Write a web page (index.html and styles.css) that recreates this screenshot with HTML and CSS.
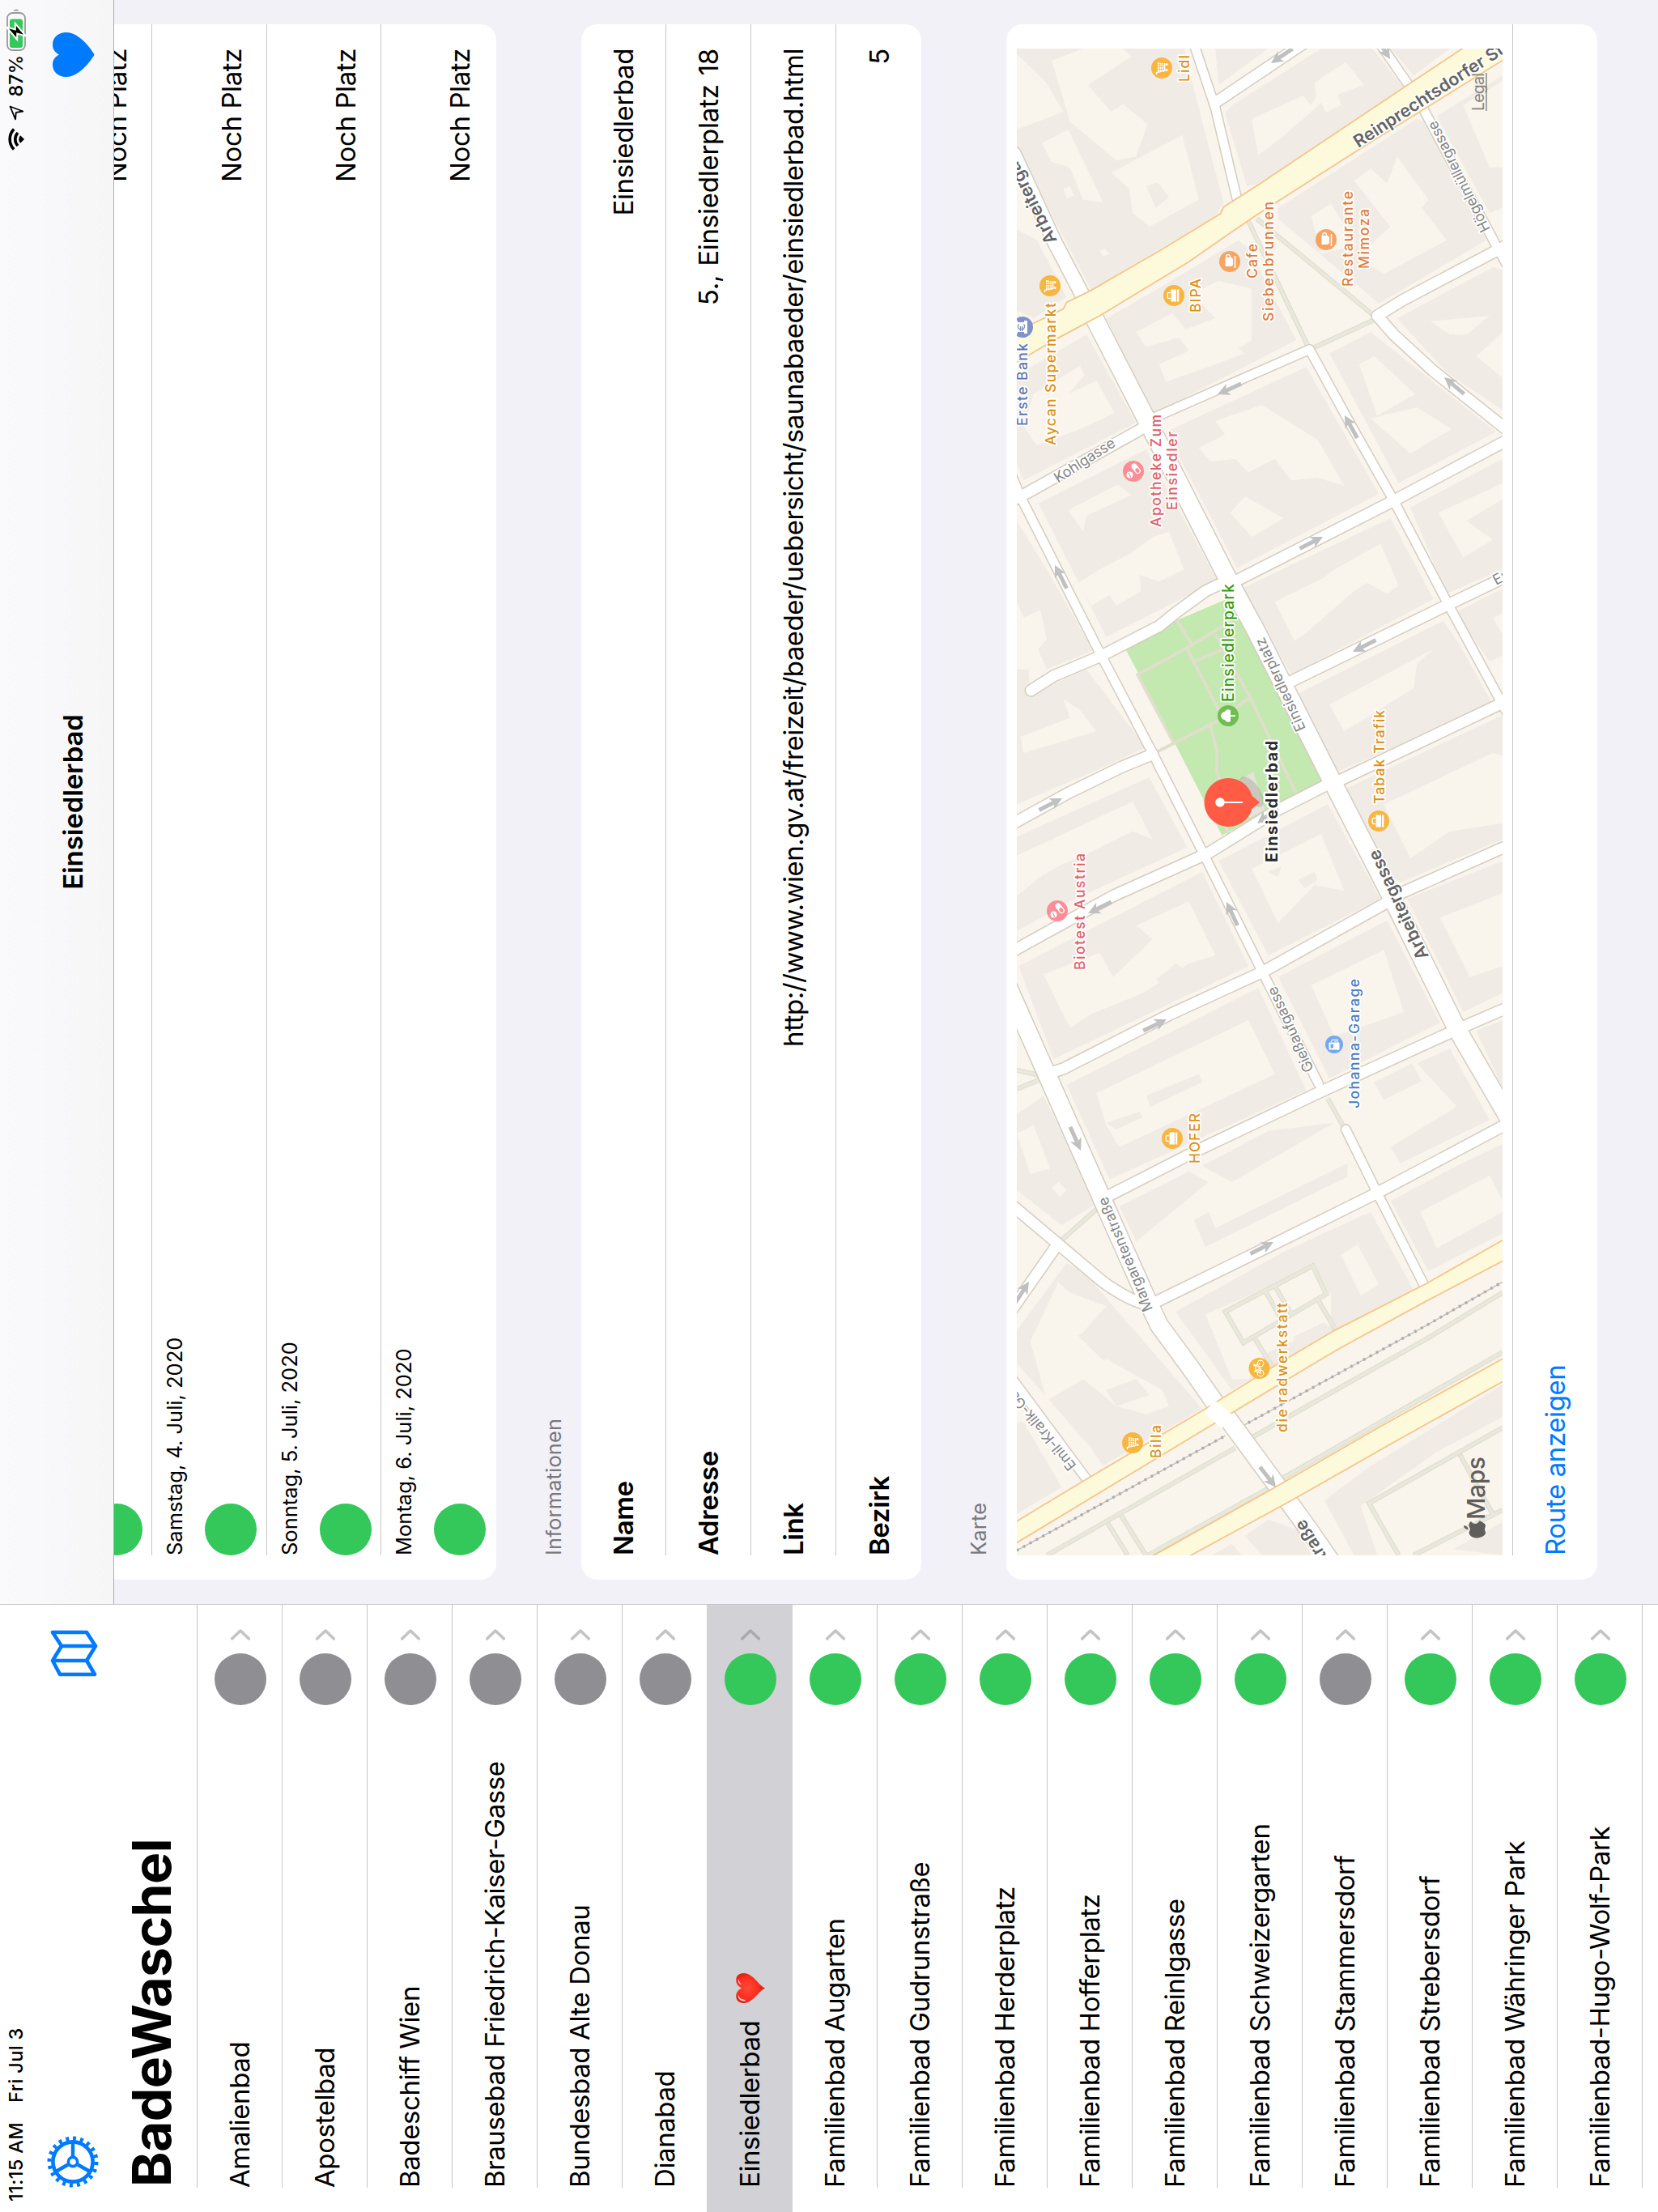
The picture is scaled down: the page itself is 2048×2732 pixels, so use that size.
FILE: index.html
```html
<!DOCTYPE html>
<html lang="de">
<head>
<meta charset="utf-8">
<title>BadeWaschel</title>
<link rel="stylesheet" href="styles.css">
</head>
<body>
<div class="screen">
<div class="device">
  <aside class="sidebar">
    <div class="status status-left"><span>11:15 AM</span><span>Fri Jul 3</span></div>
    <div class="toolbar">
      <svg class="gear" viewBox="-32 -32 64 64" fill="none" stroke="#007aff">
        <circle r="29" stroke-width="5" stroke-dasharray="4 5.11"/>
        <circle r="24.6" stroke-width="4.6"/>
        <circle r="5.6" stroke-width="3.6"/>
        <path d="M7 0H23M-3.5 -6L-12 -21M-3.5 6L-12 21" stroke-width="4.4"/>
      </svg>
      <svg class="fold" viewBox="0 0 62 60" fill="none" stroke="#007aff" stroke-width="4.6" stroke-linejoin="round">
        <path d="M5 13L22 4L40 15L57 4V46L40 57L22 46L5 56ZM22 4V46M40 15V57"/>
      </svg>
    </div>
    <h1>BadeWaschel</h1>
    <ul class="baths">
      <li><span>Amalienbad</span><i class="dot off"></i><b class="chev"></b></li>
      <li><span>Apostelbad</span><i class="dot off"></i><b class="chev"></b></li>
      <li><span>Badeschiff Wien</span><i class="dot off"></i><b class="chev"></b></li>
      <li><span>Brausebad Friedrich-Kaiser-Gasse</span><i class="dot off"></i><b class="chev"></b></li>
      <li><span>Bundesbad Alte Donau</span><i class="dot off"></i><b class="chev"></b></li>
      <li class="last"><span>Dianabad</span><i class="dot off"></i><b class="chev"></b></li>
      <li class="selected"><span>Einsiedlerbad</span>
        <svg class="love" viewBox="0 0 40 38">
          <defs><radialGradient id="red" cx=".5" cy=".4" r=".65"><stop offset="0" stop-color="#ff4a38"/><stop offset=".6" stop-color="#fb2c1c"/><stop offset="1" stop-color="#b51509"/></radialGradient></defs>
          <path d="M20 37.5C17 30 1 22 1 10.500C1 4 5 .8 10 .8C14.500 .8 18 3.500 20 8C22 3.500 25.500 .8 30 .8C35 .8 39 4 39 10.500C39 22 23 30 20 37.500Z" fill="url(#red)"/>
          <path d="M3.500 12C3 5 8 2.500 12 3.500C8 4.500 5.500 7 5 13ZM24 8C25 4 29 2.500 32 3.500C28 4.500 26 6.500 24 8Z" fill="#fff" opacity=".75"/>
        </svg><i class="dot"></i><b class="chev"></b></li>
      <li><span>Familienbad Augarten</span><i class="dot"></i><b class="chev"></b></li>
      <li><span>Familienbad Gudrunstraße</span><i class="dot"></i><b class="chev"></b></li>
      <li><span>Familienbad Herderplatz</span><i class="dot"></i><b class="chev"></b></li>
      <li><span>Familienbad Hofferplatz</span><i class="dot"></i><b class="chev"></b></li>
      <li><span>Familienbad Reinlgasse</span><i class="dot"></i><b class="chev"></b></li>
      <li><span>Familienbad Schweizergarten</span><i class="dot"></i><b class="chev"></b></li>
      <li><span>Familienbad Stammersdorf</span><i class="dot off"></i><b class="chev"></b></li>
      <li><span>Familienbad Strebersdorf</span><i class="dot"></i><b class="chev"></b></li>
      <li><span>Familienbad Währinger Park</span><i class="dot"></i><b class="chev"></b></li>
      <li><span>Familienbad-Hugo-Wolf-Park</span><i class="dot"></i><b class="chev"></b></li>
    </ul>
  </aside>

  <main class="detail">
    <header>
      <div class="status status-right">
        <svg class="wifi" viewBox="0 0 28 21"><path d="M1.500 7.200A18 18 0 0 1 26.500 7.200M6 12A11.600 11.600 0 0 1 22 12" fill="none" stroke="#000" stroke-width="3.600"/><path d="M14 20L9.300 15.200A6.500 6.500 0 0 1 18.700 15.200Z"/></svg>
        <svg class="loc" viewBox="0 0 19 19"><path d="M17.500 1.500L11.500 17.300L10.200 8.800L1.700 8.100Z" fill="none" stroke="#000" stroke-width="1.800" stroke-linejoin="round"/></svg>
        <span>87%</span>
        <svg class="battery" viewBox="0 0 53 24"><rect x="1" y="1" width="46" height="22" rx="6.500" fill="none" stroke="#999" stroke-width="1.800"/><rect x="4" y="4" width="35.500" height="16" rx="3" fill="#34c759"/><path d="M49.500 8.500C52.300 9.500 52.300 14.500 49.500 15.500Z" fill="#999"/><path d="M29.500 0L14 13.200H21.500L18.500 24L34 10.800H26.500Z" fill="#000" stroke="#fff" stroke-width="2"/></svg>
      </div>
      <div class="bar">
        <h2>Einsiedlerbad</h2>
        <svg class="fav" viewBox="0 0 55 52"><path d="M27.500 51.500C24 50 0 34 0 17C0 6 7 0 15 0C21 0 25 3 27.500 8C30 3 34 0 40 0C48 0 55 6 55 17C55 34 31 50 27.500 51.500Z" fill="#007aff"/></svg>
      </div>
    </header>
    <div class="scroll">
      <section class="card days">
        <div class="day"><p>Freitag, 3. Juli, 2020</p><div><i class="dot"></i><span>Noch Platz</span></div></div>
        <div class="day"><p>Samstag, 4. Juli, 2020</p><div><i class="dot"></i><span>Noch Platz</span></div></div>
        <div class="day"><p>Sonntag, 5. Juli, 2020</p><div><i class="dot"></i><span>Noch Platz</span></div></div>
        <div class="day"><p>Montag, 6. Juli, 2020</p><div><i class="dot"></i><span>Noch Platz</span></div></div>
      </section>
      <h3>Informationen</h3>
      <section class="card facts">
        <div><b>Name</b><span>Einsiedlerbad</span></div>
        <div><b>Adresse</b><span class="address">5., Einsiedlerplatz 18</span></div>
        <div><b>Link</b><span class="url">http://www.wien.gv.at/freizeit/baeder/uebersicht/saunabaeder/einsiedlerbad.html</span></div>
        <div><b>Bezirk</b><span>5</span></div>
      </section>
      <h3>Karte</h3>
      <section class="card">
        <div class="mapbox">
<svg class="map" viewBox="0 0 1861 600" width="1861" height="600">
<defs>
  <g id="arrow"><path d="M-32 0H-10" stroke="#c0c0c0" stroke-width="5"/><path d="M0 0L-15 -7.500L-11 0L-15 7.500Z" fill="#c0c0c0"/></g>
  <g id="cart"><circle r="13" fill="#f7b640"/><path d="M-8 -6.500H-5.500L-3.500 3.500H6" fill="none" stroke="#fff" stroke-width="1.500"/><path d="M-5 -5H7L5.500 2H-3.500Z" fill="#fff"/><path d="M-4.500 -2.700H6.500M-4 -.2H6M-1.500 -5V2M1.500 -5V2M4 -5V2" stroke="#f7b640" stroke-width=".8"/><circle cx="-2.500" cy="6" r="1.600" fill="#fff"/><circle cx="4.500" cy="6" r="1.600" fill="#fff"/></g>
  <g id="bag"><circle r="13" fill="#f7b640"/><rect x="-7.500" y="-3.500" width="15" height="6.500" fill="#fff"/><rect x="-7.500" y="4" width="15" height="2.300" fill="#fff"/><path d="M-3.500 -4V-6.500Q-3.500 -7.800 -2 -7.800H2Q3.500 -7.800 3.500 -6.500V-4" fill="none" stroke="#fff" stroke-width="1.400"/></g>
  <g id="cup"><circle r="13" fill="#f7a463"/><path d="M-6 -5.500H5V1Q5 4 2 4H-3Q-6 4 -6 1Z" fill="#fff"/><path d="M5 -4H6.500Q8.500 -4 8.500 -2Q8.500 .5 5 .5" fill="none" stroke="#fff" stroke-width="1.400"/><path d="M-8 6.500H7" stroke="#fff" stroke-width="1.600"/></g>
  <g id="pill"><circle r="13" fill="#fb8d97"/><circle cx="-4.500" cy="-4.500" r="4" fill="#fff"/><path d="M-7.500 -3.200L-2 -6" stroke="#fb8d97" stroke-width="1.200"/><g transform="rotate(-38)"><rect x="-6.500" y="1" width="14" height="7" rx="3.500" fill="#fff"/><rect x="-5.300" y="2.300" width="6" height="4.400" rx="2.200" fill="#fb8d97"/></g></g>
</defs>
<rect width="1861" height="600" fill="#f9f5ed"/>
<g transform="matrix(0 .408163 -.333333 0 1871 -16)">
  <g class="block">
    <path d="M39 330L180 265L130 160L39 50V30H545L600 300L665 600L640 650L265 925L39 400Z"/>
    <path d="M640 30H800L650 165ZM1170 30H1350L1240 130Z"/>
    <path d="M690 240L960 30H1115L1210 175L775 530L735 540L670 270Z"/>
    <path d="M830 620L1250 290L1270 300L1460 740L1135 975L830 660Z"/>
    <path d="M710 740L740 770L885 1110L450 1385L310 1030L480 910Z"/>
    <path d="M1310 280L1509 130V620L1470 640Z"/>
    <path d="M39 700L100 740L190 950L90 1030L39 1000Z"/>
    <path d="M39 1240L250 1090L400 1415L60 1630L39 1570Z"/>
    <path d="M105 1715L430 1515L645 2000L600 2030L310 2210Z"/>
    <path d="M490 1450L915 1210L1135 1680L705 1955L620 1750Z"/>
    <path d="M720 2030L1170 1770L1300 2070L870 2350Z"/>
    <path d="M890 2420L1330 2150L1380 2240L1480 2460L1010 2710L950 2600Z"/>
    <path d="M985 1160L1110 1080L1490 1450L1195 1640Z"/>
    <path d="M1190 1030L1480 840L1509 850V1370L1340 1230Z"/>
    <path d="M1230 1730L1509 1550V1960L1340 2050Z"/>
    <path d="M1365 2120L1509 2030V2280L1470 2300Z"/>
    <path d="M39 1780L130 1960L270 2260L130 2330L39 2080Z"/>
    <path d="M39 2330H75L80 2430L160 2380L250 2330L430 2620L270 2710L39 2830Z"/>
    <path d="M39 2950L440 2730L555 2990L200 3190L39 3300Z"/>
    <path d="M45 3430L600 3080L740 3430L150 3775Z"/>
    <path d="M190 3870L770 3510L915 3890L320 4220Z"/>
    <path d="M650 3040L980 2830L1140 3180L800 3390Z"/>
    <path d="M830 3470L1160 3260L1320 3640L985 3845Z"/>
    <path d="M1020 2780L1509 2500V2960L1200 3120L1140 3070Z"/>
    <path d="M1220 3180L1509 3040V3530L1390 3600Z"/>
    <path d="M1430 3670L1509 3630V3880Z"/>
    <path d="M1120 3860L1235 3790L1265 3855L1150 3925ZM1250 3790L1350 3735L1470 4000L1200 4160L1170 4100L1370 3950Z"/>
    <path d="M39 3980L120 3910L280 4310L175 4390L39 4260Z"/>
    <path d="M350 4320L560 4190L620 4230L400 4450ZM575 4370L620 4340L640 4400L1040 4160V4210L610 4470ZM600 4170L800 4040L1000 4010L690 4230Z"/>
    <path d="M1170 4300L1370 4170L1509 4090V4420L1285 4560Z"/>
    <path d="M39 4780L190 4530L240 4560L600 5070L300 5280L260 5210L39 4900Z"/>
    <path d="M520 4710L860 4480L1110 4340L1240 4630L1010 4780L690 5000Z"/>
    <path d="M39 5120L60 5120L175 5360L39 5460Z"/>
    <path d="M970 5410L1100 5290L1509 4980V5100L1310 5230L1080 5430L1130 5613H1060Z"/>
    <path d="M730 5540L800 5480L890 5520L930 5613H780ZM1360 5590L1509 5490V5613ZM630 5613L690 5570L720 5613Z"/>
  </g>
  <g class="court">
    <path d="M145 75L240 30H360L385 60L255 165L325 265L360 235L435 310L400 430L340 445L200 300Z"/>
    <path d="M115 380L195 330L250 470L300 600L240 590L200 470L145 450Z"/>
    <path d="M325 490L540 350L590 590L440 690L390 640L380 550ZM180 550L200 540L212 575L190 585ZM290 780L305 770L320 790L302 800Z"/>
    <path d="M750 290L905 205L930 240L945 205L940 160L970 130L1035 80L1090 165L1010 200L1020 240L975 265L960 230L925 270L860 340L770 425Z"/>
    <path d="M1060 520L1110 475L1160 530L1190 430L1285 590L1265 620L1340 740L1150 865L1070 800L1170 690ZM930 650L990 605L1070 760L960 790Z"/>
    <path d="M400 1080L510 1010L550 1070L640 1030L570 940L650 890L750 920V1110L710 1140L730 1160L490 1265L470 1200L560 1150L530 1100L430 1135Z"/>
    <path d="M1390 240L1509 150V470H1470Z"/>
    <path d="M90 1310L230 1205L245 1240L195 1310L280 1260L335 1380L230 1440L100 1500L60 1430Z"/>
    <path d="M195 1740L345 1645L385 1685L250 1760L240 1820ZM225 2010L290 1960L385 1900L450 1840L500 1820L545 1960L470 2005L410 1980L415 2040L340 2095L320 2055L265 2095Z"/>
    <path d="M590 1510L670 1460L640 1410L780 1350L950 1480L1030 1650L950 1620L870 1630L820 1550L740 1600L700 1550L625 1560ZM685 1750L730 1690L845 1770L750 1840Z"/>
    <path d="M820 2080L970 1990L1000 1960L1140 1865L1195 2020L1160 2050L1100 2010L1060 2040L910 2200L880 2225Z"/>
    <path d="M985 2460L1300 2255L1250 2310L1240 2400L1030 2560Z"/>
    <path d="M1075 1200L1120 1170L1245 1310L1130 1390ZM1110 1400L1250 1360L1355 1440L1230 1530Z"/>
    <path d="M1290 1040L1470 1020L1400 1090L1350 1090ZM1430 1170L1509 1080V1250Z"/>
    <path d="M1315 1750L1509 1640V1700L1400 1780L1480 1850L1390 1915ZM1480 2140L1509 2120V2200Z"/>
    <path d="M39 2150L110 2110L130 2220L100 2260L39 2190ZM50 2580L200 2510L180 2440L230 2480L280 2560L60 2640Z"/>
    <path d="M75 3000L390 2820L450 2960L390 2930L240 3020L180 3050L110 3100L39 3170V3020Z"/>
    <path d="M120 3460L290 3380L330 3470L450 3330L400 3280L560 3190L640 3390L560 3420L420 3530L260 3610L200 3660Z"/>
    <path d="M280 3900L400 3830L740 3630L820 3830L350 4100L310 4020Z"/>
    <path d="M750 3070L960 2940L1030 3150L940 3130L900 3180L830 3270Z"/>
    <path d="M930 3500L1150 3370L1210 3600L1000 3690ZM1150 2830L1480 2640L1509 2650V2900L1350 2930L1230 3030Z"/>
    <path d="M1320 3250L1509 3160V3430L1410 3470ZM39 4050L90 4020L140 4180L80 4200Z"/>
    <path d="M1260 4340L1470 4205L1509 4300V4340L1310 4475ZM145 4250L165 4230L190 4260L170 4285Z"/>
    <path d="M80 4820L165 4600L200 4640L310 4690L230 4800L330 4900L480 5000L500 5060L430 5090L340 5060L240 4960L130 5040Z"/>
    <path d="M610 4720L780 4630L930 4550L990 4650L990 4760L800 4860L740 4960L690 4960ZM1020 4500L1070 4460L1135 4610L1080 4650Z"/>
  </g>
  <g class="block"><path d="M255 165L340 120L325 265ZM430 540L465 525L500 580L460 620ZM460 3480L520 3420L545 3440L480 3500ZM430 3910L590 3830L600 3860L445 3950ZM310 4010L410 3970L420 3990L340 4035ZM800 3080L840 3060L830 3100ZM890 3110L940 3080L950 3110L910 3140ZM310 5000L400 4960L440 5020L340 5060ZM225 4800L290 4750L370 4870L300 4890ZM880 4800L970 4750L990 4770L870 4850Z"/></g>
  <path d="M368 2255L530 2145L670 2072L710 2140L965 2740L830 2835L660 2945L595 2790L520 2610L405 2340Z" fill="#c3e8b0"/>
  <path d="M690 2760L755 2710L790 2850L745 2880L700 2790Z" fill="#e6e3da"/>
  <g class="parkway">
    <path d="M520 2140L570 2240M555 2255L650 2480M515 2605L405 2350L555 2250L690 2150M580 2300L665 2255M640 2200L745 2435L885 2790M745 2435L640 2525L465 2635M625 2540L645 2630V2710L655 2750M668 2900L680 2945"/>
  </g>
  <g class="path-edge"><path d="M740 670L925 1145M765 660L1120 1020M925 1145L1130 1030M39 3815L110 3835M39 3885L110 3850M980 3920L1030 4030M285 4325L175 4445M670 4710L935 4540L975 4645L725 4825ZM790 4630L840 4740M820 4615L870 4720M760 4810L815 4920M950 4665L1005 4780M130 5613L700 5215M745 5180L1280 4810L1509 4640M435 5613L800 5365M840 5330L1509 4860M315 5495L375 5613M355 5465L430 5613M1195 5613L1105 5420L1509 5140M1380 5240L1480 5460M1240 5613L1509 5445"/></g>
  <g class="path-fill"><path d="M740 670L925 1145M765 660L1120 1020M925 1145L1130 1030M39 3815L110 3835M39 3885L110 3850M980 3920L1030 4030M285 4325L175 4445M670 4710L935 4540L975 4645L725 4825ZM790 4630L840 4740M820 4615L870 4720M760 4810L815 4920M950 4665L1005 4780M130 5613L700 5215M745 5180L1280 4810L1509 4640M435 5613L800 5365M840 5330L1509 4860M315 5495L375 5613M355 5465L430 5613M1195 5613L1105 5420L1509 5140M1380 5240L1480 5460M1240 5613L1509 5445"/></g>
  <path d="M39 5595L670 5170M720 5135L1280 4760L1509 4600" class="rail"/>
  <path d="M39 5595L670 5170M720 5135L1280 4760L1509 4600" class="rail-ties"/>
  <g class="edge">
    <path class="w10" d="M577 20L640 250L705 585M1140 15L1225 165L1270 255L1490 760L1540 870M450 1400L710 1260L925 1145L1055 1435L1180 1705L1345 2090L1509 2460L1560 2580M20 1600L50 1690L295 2280L450 2640L605 3015L780 3445L952 3865M1035 4035L1130 4270L1275 4620M20 4950L250 5330"/>
    <path class="w12" d="M640 230L920 0M1520 760L1210 960L1130 1020L1180 1090L1300 1225L1540 1460M430 1430L50 1690L0 1720M82 2408L150 2355L295 2280L470 2170L520 2120L610 2040L670 2005M690 2010L1180 1705L1540 1470M860 2380L1345 2090L1540 1975M1010 2745L1500 2460L1560 2425M990 2750L830 2850L620 3010L330 3170L0 3392M450 2645L360 2690L200 2785L0 2920M1540 2975L1200 3160L1150 3200L785 3450L500 3610L180 3810L140 3825M1540 3575L1370 3665L950 3900L590 4110L310 4285M0 4290L165 4460L300 4600Q380 4670 430 4682M0 4745L160 4465M450 4680L800 4470L1130 4270L1560 3990"/>
    <path class="w17" d="M30 420L155 750L245 960"/>
    <path class="w21" d="M270 1020L430 1400L680 2000L760 2180L1000 2760L1180 3190L1370 3660L1560 4060M10 3500L39 3580L130 3830L300 4300L435 4670L470 4760L560 4910L640 5050L680 5110L830 5360L930 5530L1020 5690"/>
  </g>
  <g class="road">
    <path class="w10" d="M577 20L640 250L705 585M1140 15L1225 165L1270 255L1490 760L1540 870M450 1400L710 1260L925 1145L1055 1435L1180 1705L1345 2090L1509 2460L1560 2580M20 1600L50 1690L295 2280L450 2640L605 3015L780 3445L952 3865M1035 4035L1130 4270L1275 4620M20 4950L250 5330"/>
    <path class="w12" d="M640 230L920 0M1520 760L1210 960L1130 1020L1180 1090L1300 1225L1540 1460M430 1430L50 1690L0 1720M82 2408L150 2355L295 2280L470 2170L520 2120L610 2040L670 2005M690 2010L1180 1705L1540 1470M860 2380L1345 2090L1540 1975M1010 2745L1500 2460L1560 2425M990 2750L830 2850L620 3010L330 3170L0 3392M450 2645L360 2690L200 2785L0 2920M1540 2975L1200 3160L1150 3200L785 3450L500 3610L180 3810L140 3825M1540 3575L1370 3665L950 3900L590 4110L310 4285M0 4290L165 4460L300 4600Q380 4670 430 4682M0 4745L160 4465M450 4680L800 4470L1130 4270L1560 3990"/>
    <path class="w17" d="M30 420L155 750L245 960"/>
    <path class="w21" d="M270 1020L430 1400L680 2000L760 2180L1000 2760L1180 3190L1370 3660L1560 4060M10 3500L39 3580L130 3830L300 4300L435 4670L470 4760L560 4910L640 5050L680 5110L830 5360L930 5530L1020 5690"/>
  </g>
  <g class="main">
    <path d="M1430 -5L1240 150L770 535L665 617L655 642L470 780L350 865L265 925L190 970L180 995L0 1100V1220L160 1105L290 1020L560 820L760 650L1080 400L1560 35V-5Z"/>
    <path d="M0 5515L265 5320L610 5070L820 4910L1000 4780L1280 4605L1560 4410V4490L1280 4670L1010 4850L860 4960L480 5240L0 5595Z"/>
    <path d="M400 5650L800 5375L1140 5135L1560 4850V4935L1200 5180L870 5410L510 5650Z"/>
  </g>
  <path d="M622 5062L676 5118" fill="none" stroke="#fff" stroke-width="21" vector-effect="non-scaling-stroke"/>
</g>
<g>
  <use href="#arrow" transform="translate(1843 314) rotate(-124)"/><use href="#arrow" transform="translate(1848 461) rotate(148)"/>
  <use href="#arrow" transform="translate(1434 248) rotate(-114)"/><use href="#arrow" transform="translate(1455 528) rotate(-50)"/>
  <use href="#arrow" transform="translate(1408 405) rotate(-29)"/><use href="#arrow" transform="translate(1223 47) rotate(-27)"/>
  <use href="#arrow" transform="translate(1258 378) rotate(63)"/><use href="#arrow" transform="translate(1116 415) rotate(-117)"/>
  <use href="#arrow" transform="translate(935 56) rotate(63)"/><use href="#arrow" transform="translate(793 88) rotate(-116)"/>
  <use href="#arrow" transform="translate(807 259) rotate(-25)"/><use href="#arrow" transform="translate(662 185) rotate(64)"/>
  <use href="#arrow" transform="translate(500 79) rotate(156)"/><use href="#arrow" transform="translate(904 297) rotate(-127)"/>
  <use href="#arrow" transform="translate(338 15) rotate(33)"/><use href="#arrow" transform="translate(387 317) rotate(63)"/>
  <use href="#arrow" transform="translate(84 320) rotate(142)"/>
</g>
<g class="street">
  <text class="major" transform="translate(740 509) rotate(-25)" textLength="147">Arbeitergasse</text>
  <text class="major" transform="translate(1624 50) rotate(-26.500)" textLength="147">Arbeitergasse</text>
  <text class="major" transform="translate(1738 422) rotate(57)">Reinprechtsdorfer Straße</text>
  <text class="major" transform="translate(46 355) rotate(-31)" text-anchor="end">Margaretenstraße</text>
  <text transform="translate(1638 585) rotate(-26.400)" textLength="151">Högelmüllergasse</text>
  <text transform="translate(1324 51) rotate(57)" textLength="86">Kohlgasse</text>
  <text transform="translate(1021 357) rotate(-24.500)" textLength="125">Einsiedlerplatz</text>
  <text transform="translate(600 367) rotate(-24.300)" textLength="114">Gießaufgasse</text>
  <text transform="translate(304 168) rotate(-22)" textLength="151">Margaretenstraße</text>
  <text transform="translate(111 74) rotate(-39)" textLength="150">Emil-Kralik-Gasse</text>
  <text transform="translate(1198 592) rotate(62)">Ernst</text>
</g>
<g class="poi">
  <g class="shop">
    <use href="#cart" x="1837" y="179"/><text x="1820" y="212.500" textLength="33">Lidl</text>
    <use href="#cart" x="1568" y="41"/><text x="1371" y="47.500" textLength="176">Aycan Supermarkt</text>
    <use href="#bag" x="1556" y="194"/><text x="1535" y="226.500" textLength="42">BIPA</text>
    <use href="#bag" x="907" y="447"/><text x="928" y="454" textLength="116">Tabak Trafik</text>
    <use href="#bag" x="515" y="192"/><text x="484" y="225.500" textLength="62">HOFER</text>
    <use href="#cart" x="139" y="143"/><text x="120" y="177.500" textLength="41">Billa</text>
    <circle cx="231" cy="299.500" r="13" fill="#f7b640"/>
    <g fill="none" stroke="#fff" stroke-width="1.200"><circle cx="225" cy="301" r="3.800"/><circle cx="237" cy="301" r="3.800"/><path d="M225 301L228 295H235L231 301ZM231 301L227 293M237 301L234 293H237"/></g>
    <text x="152" y="333.500" textLength="160">die radwerkstatt</text>
  </g>
  <g class="food">
    <use href="#cup" x="1598" y="263"/><text x="1577" y="296.500" textLength="43">Cafe</text><text x="1524" y="316.500" textLength="148">Siebenbrunnen</text>
    <use href="#cup" x="1625" y="382"/><text x="1567" y="414.500" textLength="118">Restaurante</text><text x="1589" y="435" textLength="74">Mimoza</text>
  </g>
  <g class="med">
    <use href="#pill" x="1339" y="144"/><text x="1270" y="177.500" textLength="139">Apotheke Zum</text><text x="1291" y="197.500" textLength="97">Einsiedler</text>
    <use href="#pill" x="796" y="50"/><text x="723" y="84" textLength="144">Biotest Austria</text>
  </g>
  <g class="bank"><circle cx="1517" cy="7" r="13" fill="#7f93c4"/><path d="M1509 -2H1525V1H1523V9H1525V13H1509V9H1511V1H1509Z" fill="#fff"/><path d="M1520.500 2.500A4 4 0 1 0 1520.500 8.500M1512 4.500H1518M1512 6.800H1518" fill="none" stroke="#7f93c4" stroke-width="1.400"/><text x="1395" y="13" textLength="102">Erste Bank</text></g>
  <g class="gas"><circle cx="631" cy="392" r="11" fill="#74a8f0"/><path d="M625 386H633V398H625ZM624 397H634" fill="#fff" stroke="#fff"/><rect x="626.500" y="387.500" width="5" height="3.500" fill="#74a8f0"/><path d="M634 388L637 390V396H635V392" fill="none" stroke="#fff" stroke-width="1.200"/><text x="552" y="423" textLength="160">Johanna-Garage</text></g>
  <g class="green"><circle cx="1037" cy="261" r="13" fill="#72bd50"/><path d="M1036 270V264H1030Q1028 259 1031.500 257.500Q1033 252 1037 252Q1041 252 1042.500 257.500Q1046 259 1044 264H1038V270Z" fill="#fff"/><text x="1054" y="268" textLength="146">Einsiedlerpark</text></g>
  <ellipse cx="943" cy="290" rx="22" ry="10" fill="#000" opacity=".12" transform="rotate(-35 943 290)"/>
  <path d="M930 300L922 290.500A30 30 0 1 1 938 290.500Z" fill="#ff5b45"/>
  <circle cx="930" cy="251" r="5.800" fill="#fff"/><path d="M930 255V279" stroke="#fff" stroke-width="2"/>
  <text class="place" x="856" y="321.500" textLength="150">Einsiedlerbad</text>
</g>
<text class="legal" x="1784" y="577" textLength="47">Legal</text>
<path d="M1784 580H1831" stroke="#8a8884" stroke-width="1.500"/>
<text class="maps" x="44" y="578" textLength="78">Maps</text>
<path d="M32 560C34 560 35 558.500 37.500 558.500C39.500 558.500 41 559.500 42 561C37.500 564 38.500 569.500 42.800 571.500C41.500 575 39 579 36.800 579C35 579 34.500 578 32.300 578C30 578 29.500 579 27.800 579C24.500 579 21.500 572.500 21.500 567.500C21.500 562 25 558.600 28.200 558.600C30 558.600 31 560 32 560ZM32 557.500C31.800 555 34 552.200 36.800 552C37 555 34.800 557.500 32 557.500Z" fill="#5f5e5b"/>
</svg>
        </div>
        <div class="route">Route anzeigen</div>
      </section>
    </div>
  </main>
</div>
</div>
</body>
</html>
```

FILE: styles.css
```css
* { box-sizing: border-box; margin: 0; padding: 0; }
body { width: 2048px; height: 2732px; overflow: hidden; background: #fff; }
.screen { width: 2048px; height: 2732px; overflow: hidden; }
.device {
  width: 2732px; height: 2048px;
  display: grid; grid-template-columns: 751px 1981px;
  transform-origin: 0 0;
  transform: translateY(2732px) rotate(-90deg);
  font-family: Inter, "Liberation Sans", sans-serif;
  font-size: 33px; letter-spacing: -0.4px; color: #000; line-height: 1.2;
}
i, b { font-style: normal; }

.sidebar { height: 2048px; border-right: 1px solid #c6c6c8; background: #fff; overflow: hidden; }
.status { height: 40px; display: flex; align-items: center; font-size: 23.500px; letter-spacing: 0; font-weight: 450; }
.status-left { padding-left: 13px; gap: 24px; letter-spacing: 0.35px; }
.toolbar { height: 100px; padding: 0 29px 0 30px; display: flex; justify-content: space-between; align-items: center; }
.gear { width: 64px; height: 64px; }
.fold { width: 62px; height: 60px; margin-top: 1px; }
h1 { height: 103px; padding: 2px 0 0 31px; font-size: 66px; line-height: 90px; font-weight: 700; letter-spacing: -0.6px; }
.baths { list-style: none; }
.baths li {
  height: 105px; margin-left: 30px; padding: 2px 30px 0 0;
  display: flex; align-items: center; border-bottom: 1px solid #c6c6c8;
}
.baths li:first-child { border-top: 1px solid #c6c6c8; height: 106px; }
.baths .last { border-bottom-color: #d1d1d6; }
.baths .selected { margin-left: 0; padding-left: 30px; background: #d1d1d6; border-bottom-color: #d1d1d6; }
.baths .last { margin-left: 0; padding-left: 30px; }
.dot { width: 64px; height: 64px; border-radius: 50%; background: #34c759; flex: none; }
.off { background: #8e8e93; }
.baths .dot { margin-left: auto; margin-right: 16px; }
.love { width: 39px; height: 38px; margin-left: 21px; }
.chev {
  width: 14px; height: 24px; background: #c4c4c7; flex: none;
  clip-path: polygon(0 2px, 1px 0, 3px 0, 13.500px 11px, 13.500px 13px, 3px 24px, 1px 24px, 0 22px, 9.500px 12px);
}
.selected .chev { background: #a9a9ae; }

.detail { height: 2048px; background: #f2f1f7; display: flex; flex-direction: column; overflow: hidden; }
header { height: 141px; flex: none; border-bottom: 1px solid #aeaeb2; background: linear-gradient(180deg, #fafafc, #f6f6f7); }
.status-right { justify-content: flex-end; padding-right: 10px; }
.wifi { width: 28px; height: 21px; margin-right: 9px; }
.loc { width: 19px; height: 19px; margin-right: 10px; }
.battery { width: 53px; height: 24px; margin-left: 5px; }
.bar { height: 100px; display: grid; grid-template-columns: 1fr auto 1fr; align-items: center; padding: 2px 40px 0; }
h2 { grid-column: 2; font-size: 33px; font-weight: 600; letter-spacing: -0.1px; }
.fav { justify-self: end; width: 55px; height: 52px; }
.scroll { flex: 1; min-height: 0; overflow: hidden; padding: 0 30px; }
.card { background: #fff; border-radius: 20px; padding-left: 30px; overflow: hidden; }
.days { margin-top: -94px; padding-bottom: .7px; }
.day { height: 141.330px; border-bottom: 1px solid #c6c6c8; padding: 11px 30px 0 0; }
.day:last-child, .facts div:last-child { border-bottom: 0; }
.day p { font-size: 25.500px; line-height: 34px; height: 54px; letter-spacing: 0; }
.day div { display: flex; justify-content: space-between; align-items: center; }
.day span { position: relative; top: 1px; }
h3 { height: 105px; padding: 54px 0 0 30px; font-size: 25.500px; line-height: 34px; font-weight: 400; color: #77777c; letter-spacing: 0.15px; }
.facts div { height: 105px; border-bottom: 1px solid #c6c6c8; padding: 2px 30px 0 0; display: flex; justify-content: space-between; align-items: center; }
.facts b { font-weight: 600; }
.address { word-spacing: 2px; letter-spacing: -0.25px; }
.url { letter-spacing: -0.5px; }
.mapbox { height: 626px; padding-top: 13px; border-bottom: 1px solid #c6c6c8; }
.map { display: block; overflow: hidden; letter-spacing: 0; }
.route { height: 104px; padding-top: 2px; display: flex; align-items: center; color: #007aff; }

.block { fill: #f0ece5; }
.court { fill: #f9f5ed; }
.parkway path { fill: none; stroke: #dfdfcb; stroke-width: 4; vector-effect: non-scaling-stroke; }
.path-edge path { fill: none; stroke: #dddccb; stroke-width: 6; vector-effect: non-scaling-stroke; }
.path-fill path { fill: none; stroke: #e9e8dc; stroke-width: 4; vector-effect: non-scaling-stroke; }
.rail { fill: none; stroke: #b9b8b6; stroke-width: 1.200; vector-effect: non-scaling-stroke; }
.rail-ties { fill: none; stroke: #b0afae; stroke-width: 3.500; stroke-dasharray: 3 6; vector-effect: non-scaling-stroke; }
.edge path, .road path { fill: none; stroke-linejoin: round; stroke-linecap: round; vector-effect: non-scaling-stroke; }
.edge path { stroke: #d5ccc0; }
.road path { stroke: #fff; }
.road .w10 { stroke-width: 10.500px; } .edge .w10 { stroke-width: 13.500px; }
.road .w12 { stroke-width: 13px; } .edge .w12 { stroke-width: 16px; }
.road .w17 { stroke-width: 17px; } .edge .w17 { stroke-width: 20px; }
.road .w21 { stroke-width: 21.500px; } .edge .w21 { stroke-width: 24.500px; }
.main path { fill: #fcfadb; stroke: #f5c58b; stroke-width: 1.800; vector-effect: non-scaling-stroke; }
.map text { paint-order: stroke; stroke: #fff; stroke-width: 3.500; stroke-linejoin: round; }
.street { font-size: 18px; fill: #858585; }
.street .major { font-size: 21.500px; font-weight: 600; fill: #646464; }
.poi { font-size: 17.500px; font-weight: 500; }
.shop { fill: #dd9115; }
.food { fill: #de7d3a; }
.med { fill: #e06069; }
.bank { fill: #6076ae; }
.gas { fill: #4a7cc0; }
.green { fill: #379c12; font-size: 19.500px; }
.poi .place { fill: #2a2a2a; font-size: 19.500px; font-weight: 700; stroke-width: 5; }
.map .legal { font-size: 19.500px; fill: #85837f; stroke: none; }
.map .maps { font-size: 30px; font-weight: 500; fill: #5f5e5b; stroke: none; }
```
